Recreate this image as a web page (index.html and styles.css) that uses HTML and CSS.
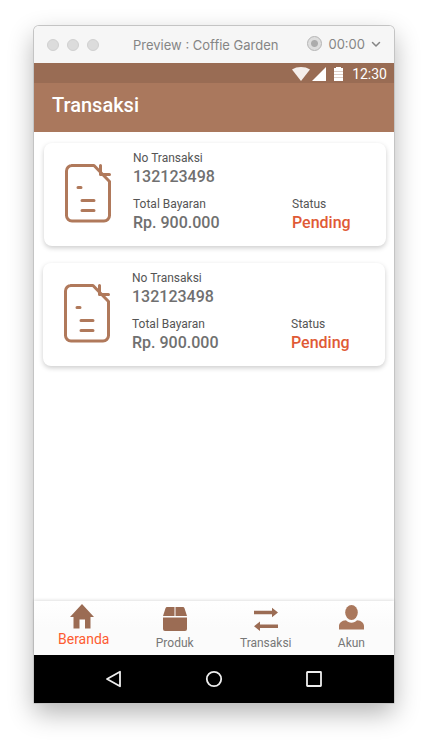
FILE: index.html
```html
<!DOCTYPE html>
<html lang="id">
<head>
<meta charset="utf-8">
<meta name="viewport" content="width=device-width, initial-scale=1">
<title>Preview : Coffie Garden</title>
<link rel="stylesheet" href="styles.css">
</head>
<body>
<svg class="sprite" aria-hidden="true">
  <symbol id="receipt" viewBox="0 0 48 60">
    <g fill="none" stroke="currentColor" stroke-width="3" stroke-linecap="round" stroke-linejoin="round">
      <path d="M7.500 2.500H30L45.500 18.500V52.500a5.500 5.500 0 0 1-5.500 5.500H8a5.500 5.500 0 0 1-5.500-5.500V8a5.500 5.500 0 0 1 5.500-5.500"/>
      <path d="M36.500 2.500v9H45.500M14 24.500h3M18 37.500h12M18 47.500h12"/>
    </g>
  </symbol>
</svg>
<div class="window">
  <header class="titlebar">
    <div class="lights">
      <button type="button" aria-label="Close"></button>
      <button type="button" aria-label="Minimize"></button>
      <button type="button" aria-label="Zoom"></button>
    </div>
    <span class="title">Preview : Coffie Garden</span>
    <button type="button" class="recorder">
      <span class="record"></span>
      <span>00:00</span>
      <svg width="10" height="8" viewBox="0 0 10 8" fill="none" stroke="currentColor" stroke-width="1.500" stroke-linecap="round" stroke-linejoin="round"><path d="M1.500 2.500L5 6 8.500 2.500"/></svg>
    </button>
  </header>
  <div class="statusbar">
    <svg class="wifi" width="18" height="14" viewBox="0 0 18 14" fill="#f5efec"><path d="M0 2.500C5-.8 13-.8 18 2.500L9 14z"/></svg>
    <svg class="signal" width="14" height="14" viewBox="0 0 14 14" fill="#fff"><path d="M14 0v14H0z"/></svg>
    <svg class="battery" width="9" height="14" viewBox="0 0 9 14"><path d="M2 0h5v1h2v13H0V1h2z" fill="#fff"/><path d="M0 4.500h9M0 7.500h9M0 10.500h9" stroke="#decfc7" stroke-width="1"/></svg>
    <time>12:30</time>
  </div>
  <div class="appbar"><h1>Transaksi</h1></div>
  <main class="list">
    <article class="card">
      <svg class="receipt" width="48" height="60" aria-hidden="true"><use href="#receipt"/></svg>
      <dl class="details">
        <div class="number"><dt>No Transaksi</dt><dd>132123498</dd></div>
        <div><dt>Total Bayaran</dt><dd>Rp. 900.000</dd></div>
        <div class="status"><dt>Status</dt><dd>Pending</dd></div>
      </dl>
    </article>
    <article class="card shifted">
      <svg class="receipt" width="48" height="60" aria-hidden="true"><use href="#receipt"/></svg>
      <dl class="details">
        <div class="number"><dt>No Transaksi</dt><dd>132123498</dd></div>
        <div><dt>Total Bayaran</dt><dd>Rp. 900.000</dd></div>
        <div class="status"><dt>Status</dt><dd>Pending</dd></div>
      </dl>
    </article>
  </main>
  <nav class="tabs">
    <a class="active" href="#beranda">
      <svg width="28" height="25" viewBox="0 0 28 25" fill="currentColor"><path d="M12 0l12 13h-3.500v11.500H15v-9H9.500v9H3.500V13H0z"/></svg>
      <span>Beranda</span>
    </a>
    <a href="#produk">
      <svg width="24" height="25" viewBox="0 0 24 25" fill="currentColor"><path d="M4 0h7.500v9H0L2.500 1.200Q3 0 4 0zM12.500 0H20q1 0 1.500 1.200L24 9H12.500zM0 10.500h24V22a2 2 0 0 1-2 2H2a2 2 0 0 1-2-2z"/></svg>
      <span>Produk</span>
    </a>
    <a href="#transaksi">
      <svg width="24" height="25" viewBox="0 0 24 25" fill="currentColor"><path d="M0 3.800h18V.8L24 5.500l-6 4.800v-3H0zM24 17.500H6v-3L0 19.200 6 24v-3h18z"/></svg>
      <span>Transaksi</span>
    </a>
    <a class="account" href="#akun">
      <svg width="25" height="25" viewBox="0 0 25 25" fill="currentColor"><ellipse cx="12.500" cy="7.500" rx="6.300" ry="7.500"/><path d="M0 24.500v-3.500c0-3 2.500-5.500 7-5.800 2.500 3.300 8.500 3.300 11 0 4.500.3 7 2.800 7 5.800v3.500z"/></svg>
      <span>Akun</span>
    </a>
  </nav>
  <footer class="system">
    <button type="button" aria-label="Back"><svg width="18" height="18" viewBox="0 0 18 18"><path d="M15 1.700v14.600L2 9z"/></svg></button>
    <button type="button" aria-label="Home"><svg width="18" height="18" viewBox="0 0 18 18"><circle cx="9" cy="9" r="7.200"/></svg></button>
    <button type="button" aria-label="Recent apps"><svg width="18" height="18" viewBox="0 0 18 18"><rect x="2" y="2" width="14" height="14" rx=".5"/></svg></button>
  </footer>
</div>
</body>
</html>
```
FILE: styles.css
```css
* {
  box-sizing: border-box;
}

body {
  display: flex;
  min-height: 100vh;
  margin: 0;
  padding: 26px 34px 42px;
  background: #fff;
  font-family: Roboto, "Liberation Sans", sans-serif;
}

button {
  padding: 0;
  border: 0;
  background: none;
  color: inherit;
  font: inherit;
}

svg {
  display: block;
  flex: none;
}

.sprite {
  position: absolute;
  width: 0;
  height: 0;
}

.window {
  display: flex;
  flex: 1;
  flex-direction: column;
  border-radius: 5px 5px 1px 1px;
  background: #fff;
  box-shadow: 0 0 0 1px #c4c4c4, 0 10px 26px rgba(0, 0, 0, 0.3);
}

.titlebar {
  display: flex;
  align-items: center;
  height: 37px;
  padding: 0 13px;
  border-radius: 5px 5px 0 0;
  background: #f6f6f6;
  color: #858585;
  font-family: Inter, Roboto, sans-serif;
  font-size: 13px;
}

.lights {
  display: flex;
  gap: 8px;
}

.lights button {
  width: 12px;
  height: 12px;
  border: 1px solid #d0d0d0;
  border-radius: 50%;
  background: #dcdcdc;
}

.title {
  margin-left: 34px;
  white-space: nowrap;
}

.recorder {
  display: flex;
  align-items: center;
  gap: 6px;
  margin-left: auto;
  padding-bottom: 2px;
}

.record {
  width: 15px;
  height: 15px;
  border: 1px solid #b4b4b4;
  border-radius: 50%;
  background: radial-gradient(circle, #acacac 3px, #dedede 4px);
}

.statusbar {
  display: flex;
  align-items: center;
  justify-content: flex-end;
  height: 20px;
  padding: 2px 7px 0 0;
  background: #996c54;
  color: #fff;
  font-size: 14px;
}

.signal {
  margin-left: 2px;
}

.battery {
  margin: 0 9px 0 8px;
}

.appbar {
  display: flex;
  align-items: center;
  height: 49px;
  padding: 0 18px 6px;
  background: #aa785d;
  color: #fff;
}

h1 {
  margin: 0;
  font-size: 20px;
  font-weight: 500;
}

.list {
  display: flex;
  flex: 1;
  flex-direction: column;
  gap: 17px;
  padding: 11px 8px 11px 10px;
}

.card {
  display: flex;
  gap: 21px;
  padding: 7px 16px 12px 20px;
  border-radius: 8px;
  background: #fff;
  box-shadow: 0 2px 5px rgba(0, 0, 0, 0.2);
}

.card.shifted {
  margin: 0 1px 0 -1px;
}

.receipt {
  margin-top: 13px;
  color: #b0795b;
}

.details {
  display: grid;
  flex: 1;
  grid-template-columns: 1fr 78px;
  row-gap: 8px;
  margin: 0;
}

.number {
  grid-column: 1 / -1;
}

dt {
  color: #555;
  font-size: 12px;
  line-height: 16px;
}

dd {
  margin: 0;
  color: #707070;
  font-size: 16px;
  font-weight: 500;
  line-height: 22px;
}

.status dd {
  color: #df5a36;
}

.tabs {
  display: flex;
  justify-content: space-between;
  height: 54px;
  padding: 6px 29px 0 24px;
  background: linear-gradient(#fff, #fbfbfb 50%);
  box-shadow: 0 -1px 3px rgba(0, 0, 0, 0.12);
}

.tabs a {
  display: flex;
  flex-direction: column;
  align-items: center;
  gap: 3px;
  color: #9b6c54;
  text-decoration: none;
}

.tabs span {
  color: #777;
  font-size: 12px;
  line-height: 16px;
}

.tabs .active {
  gap: 2px;
  margin-top: -3px;
}

.tabs .active span {
  color: #fd5b31;
  font-size: 14px;
}

.tabs .account {
  gap: 5px;
  margin-top: -2px;
  color: #aa785d;
}

.system {
  display: flex;
  align-items: center;
  justify-content: center;
  gap: 82px;
  height: 48px;
  background: #000;
}

.system svg {
  fill: none;
  stroke: #eee;
  stroke-width: 1.8;
  stroke-linejoin: round;
}
```
